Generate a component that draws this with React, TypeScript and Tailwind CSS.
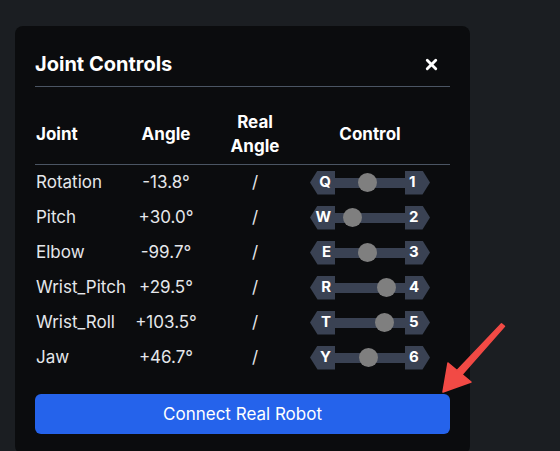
import { X } from 'lucide-react'

const joints = [
  { name: 'Rotation', angle: '-13.8°', left: 'Q', right: '1', knob: 57 },
  { name: 'Pitch', angle: '+30.0°', left: 'W', right: '2', knob: 42 },
  { name: 'Elbow', angle: '-99.7°', left: 'E', right: '3', knob: 57 },
  { name: 'Wrist_Pitch', angle: '+29.5°', left: 'R', right: '4', knob: 76 },
  { name: 'Wrist_Roll', angle: '+103.5°', left: 'T', right: '5', knob: 74 },
  { name: 'Jaw', angle: '+46.7°', left: 'Y', right: '6', knob: 58 },
]

// Joint slider: key badge on each end, grey knob sits on the track
function JointSlider({ left, right, knob }: { left: string; right: string; knob: number }) {
  return (
    <div className="relative flex items-center w-[120px] h-6">
      <div className="w-[25px] h-6 bg-[#3a4253] flex items-center justify-end pr-[4px] text-white text-[15px] font-bold [clip-path:polygon(30%_0,100%_0,100%_100%,30%_100%,0_50%)]">
        {left}
      </div>
      <div className="flex-1 h-2.5 bg-[#3a4253]" />
      <div className="w-[25px] h-6 bg-[#3a4253] flex items-center justify-start pl-[4px] text-white text-[15px] font-bold [clip-path:polygon(0_0,70%_0,100%_50%,70%_100%,0_100%)]">
        {right}
      </div>
      <div
        className="absolute top-1/2 w-[19px] h-[19px] -mt-[9.5px] rounded-full bg-[#7f7f7f]"
        style={{ left: knob - 9.5 }}
      />
    </div>
  )
}

export default function App() {
  return (
    <div
      className="relative w-[560px] h-[451px] overflow-hidden bg-[#1b1e22] pl-[15px] pt-[26px]"
      style={{ fontFamily: 'Inter, "Noto Sans", sans-serif' }}
    >
      <div className="w-[455px] rounded-lg bg-[#0b0c0e] px-5 pt-6 pb-5">
        <div className="flex items-center justify-between pb-2 border-b border-[#4b5563]">
          <h2 className="text-[20px] font-bold text-white leading-7">Joint Controls</h2>
          <X className="w-[17px] h-[17px] text-white mr-[10px]" strokeWidth={4} />
        </div>

        <div className="mt-[17px] text-[17px] text-[#e5e7eb]">
          <div className="grid grid-cols-[95px_72px_106px_124px] items-center border-b border-[#4b5563] py-1.5 font-bold text-white leading-6">
            <div className="pl-px">Joint</div>
            <div className="text-center">Angle</div>
            <div className="text-center">
              Real
              <br />
              Angle
            </div>
            <div className="text-center">Control</div>
          </div>
          {joints.map(j => (
            <div key={j.name} className="grid grid-cols-[95px_72px_106px_124px] items-center h-[35px]">
              <div className="pl-px whitespace-nowrap">{j.name}</div>
              <div className="text-center whitespace-nowrap">{j.angle}</div>
              <div className="text-center">/</div>
              <div className="flex justify-center">
                <JointSlider left={j.left} right={j.right} knob={j.knob} />
              </div>
            </div>
          ))}
        </div>

        <button className="mt-[19px] w-full rounded-md bg-[#2563eb] py-2 text-[17px] font-normal text-white leading-6">
          Connect Real Robot
        </button>
      </div>

      <svg className="absolute left-0 top-0 pointer-events-none" width="560" height="451">
        <polygon
          points="443,392 448,363 457,370.5 501.5,323.7 504.5,326.3 462,374.5 471,382"
          fill="#f24a45"
          stroke="#f24a45"
          strokeWidth="1.5"
          strokeLinejoin="round"
        />
      </svg>
    </div>
  )
}
